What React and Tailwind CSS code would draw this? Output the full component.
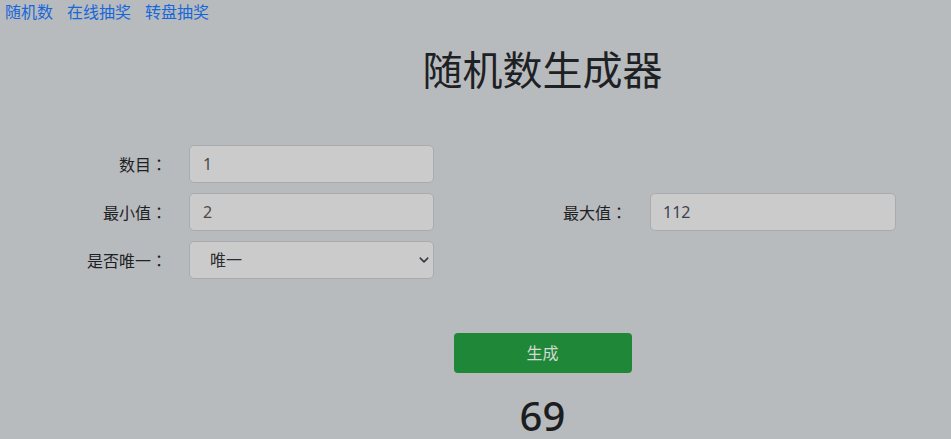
import React from "react";

const font = { fontFamily: '"Noto Sans", "Noto Sans CJK SC", sans-serif' };

function Colon() {
  return (
    <span style={{ fontFamily: '"Noto Sans CJK TC", "Noto Sans CJK SC", sans-serif' }}>：</span>
  );
}

export default function App() {
  return (
    <div
      className="min-h-[439px] w-full bg-[#b8bbbe] text-[#1e2124] overflow-hidden"
      style={font}
    >
      <nav className="flex h-6 items-center pl-[5px] gap-[14px] text-base leading-6">
        <a className="text-[#1767d8]">随机数</a>
        <a className="text-[#1767d8]">在线抽奖</a>
        <a className="text-[#1767d8]">转盘抽奖</a>
      </nav>

      <div className="pl-[134px] text-center mt-[22px]">
        <h1 className="text-[40px] leading-[48px] font-normal">随机数生成器</h1>
      </div>

      <div className="mt-[51px] flex flex-col gap-[10px] text-base">
        <div className="flex items-center h-[38px]">
          <label className="w-[167px] text-right">数目<Colon /></label>
          <input
            defaultValue="1"
            className="ml-[22px] w-[245px] h-[38px] rounded-[5px] border border-[#a9acae] bg-[#cbcbcb] px-[13px] text-[#4d4845] outline-none"
          />
        </div>
        <div className="flex items-center h-[38px]">
          <label className="w-[167px] text-right">最小值<Colon /></label>
          <input
            defaultValue="2"
            className="ml-[22px] w-[245px] h-[38px] rounded-[5px] border border-[#a9acae] bg-[#cbcbcb] px-[13px] text-[#4d4845] outline-none"
          />
          <label className="w-[193px] text-right">最大值<Colon /></label>
          <input
            defaultValue="112"
            className="ml-[23px] w-[246px] h-[38px] rounded-[5px] border border-[#a9acae] bg-[#cbcbcb] px-[12px] text-[#3e4150] outline-none"
          />
        </div>
        <div className="flex items-center h-[38px]">
          <label className="w-[167px] text-right">是否唯一<Colon /></label>
          <div className="relative ml-[22px] w-[245px] h-[38px]">
            <select
              defaultValue="1"
              className="appearance-none w-full h-[38px] rounded-[5px] border border-[#a9acae] bg-[#cbcbcb] pl-[20px] pr-8 text-[#2a2c2f] outline-none"
            >
              <option value="1">唯一</option>
              <option value="0">不唯一</option>
            </select>
            <svg
              className="pointer-events-none absolute right-[4px] top-[14px]"
              width="12"
              height="10"
              viewBox="0 0 16 16"
            >
              <path
                d="M2 5l6 6 6-6"
                fill="none"
                stroke="#343a40"
                strokeWidth="2.5"
                strokeLinecap="round"
                strokeLinejoin="round"
              />
            </svg>
          </div>
        </div>
      </div>

      <div className="pl-[134px] flex flex-col items-center mt-[54px]">
        <button className="w-[178px] h-[40px] rounded-[4px] bg-[#1e8738] text-[#d3dad5] text-base">
          生成
        </button>
        <div className="mt-[19px] text-[40px] leading-[48px] font-medium text-[#1b1d20]">
          69
        </div>
      </div>
    </div>
  );
}
